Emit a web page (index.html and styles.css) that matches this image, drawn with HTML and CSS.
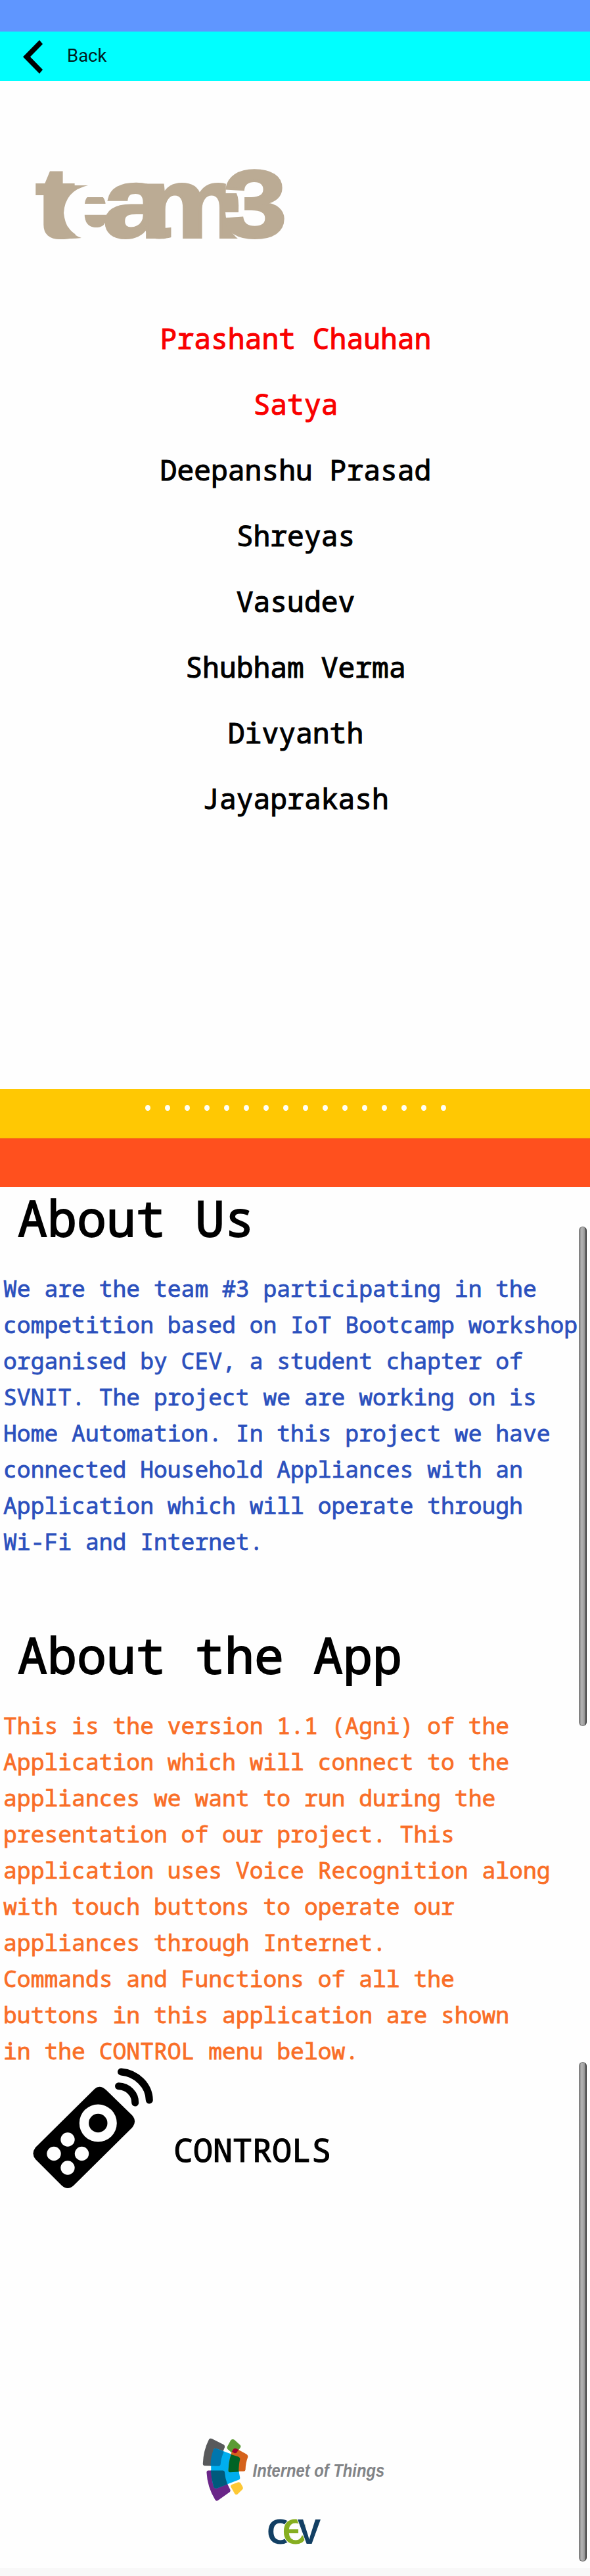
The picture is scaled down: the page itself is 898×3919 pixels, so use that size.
FILE: index.html
```
<!DOCTYPE html>
<html lang="en">
<head>
<meta charset="utf-8">
<title>About</title>
<link rel="stylesheet" href="styles.css">
</head>
<body>
<div class="status"></div>
<header class="bar">
<svg class="back" viewBox="0 0 30 51" width="30" height="51"><path d="M25 0L30 6L11 25.500L30 45L25 51L0 25.500Z"/></svg>
<span class="bar-label">Back</span>
</header>
<section class="team">
<svg class="logo" viewBox="0 0 390 120" width="390" height="120">
<g class="logo-text">
<path d="M78 50H116V96H78Z"/>
<text transform="scale(1.2 1)" y="111" font-size="150"><tspan x="3.700">t</tspan><tspan x="36" class="cut">e</tspan><tspan x="89">a</tspan><tspan x="135">m</tspan></text>
<path d="M36 32H84Q49 40 47 74Q50 104 74 112Q48 115 36 109Z"/>
<path class="hole" d="M294 24H350V114H313Q295 100 293 73Z"/>
<path d="M290 44H310Q314 52 313 73H290Z"/>
<text transform="scale(1.2 1)" x="241.500" y="110" font-size="145">3</text>
</g>
</svg>
<ul class="names">
<li class="lead">Prashant Chauhan</li>
<li class="lead">Satya</li>
<li>Deepanshu Prasad</li>
<li>Shreyas</li>
<li>Vasudev</li>
<li>Shubham Verma</li>
<li>Divyanth</li>
<li>Jayaprakash</li>
</ul>
</section>
<div class="band yellow">
<i></i><i></i><i></i><i></i><i></i><i></i><i></i><i></i><i></i><i></i><i></i><i></i><i></i><i></i><i></i><i></i>
</div>
<div class="band orange"></div>
<main class="about">
<div class="scroll first"></div>
<div class="scroll second"></div>
<h1>About Us</h1>
<p class="blue">We are the team #3 participating in the<br>competition based on IoT Bootcamp workshop<br>organised by CEV, a student chapter of<br>SVNIT. The project we are working on is<br>Home Automation. In this project we have<br>connected Household Appliances with an<br>Application which will operate through<br>Wi-Fi and Internet.</p>
<h1>About the App</h1>
<p class="amber">This is the version 1.1 (Agni) of the<br>Application which will connect to the<br>appliances we want to run during the<br>presentation of our project. This<br>application uses Voice Recognition along<br>with touch buttons to operate our<br>appliances through Internet.<br>Commands and Functions of all the<br>buttons in this application are shown<br>in the CONTROL menu below.</p>
<div class="controls">
<svg class="remote" viewBox="50 3146 184 186" width="184" height="186">
<path d="M144 3178Q152 3170.500 162 3180L201 3218Q209 3227 201 3237L112 3325Q103 3333 94 3325L54 3285Q47 3276.500 54 3267Z"/>
<circle cx="149.300" cy="3230" r="28.500" class="hole"/>
<circle cx="149.300" cy="3230" r="14.200"/>
<g class="hole"><circle cx="103" cy="3255" r="10.700"/><circle cx="82" cy="3276.500" r="10.700"/><circle cx="124.500" cy="3276.500" r="10.700"/><circle cx="103" cy="3298" r="10.700"/></g>
<path class="wave" d="M180.500 3173.700C195 3174 206 3186 205.700 3199M184.500 3152C208 3154 227 3173 227.300 3195"/>
</svg>
<span class="controls-label">CONTROLS</span>
</div>
<div class="brands">
<svg viewBox="84 86 840 292" width="280" height="97">
<path fill="#58595b" d="M113 92Q119 86 127 90L181 117Q187 121 185 129Q169 163 166 206Q165 215 157 215L92 213Q84 212 85 203Q87 143 113 92Z"/>
<path fill="#6a2688" d="M110 235H176Q184 235 185 243Q188 282 210 322Q213 330 206 335L153 373Q146 377 141 369Q105 310 102 244Q102 235 110 235Z"/>
<path fill="#5b9b35" d="M213 96Q221 89 229 94L254 117Q261 123 257 130L244 148L217 154L198 137Q193 132 197 125Z"/>
<path fill="#00aeef" d="M135 137Q139 132 148 135L247 172Q256 176 255 184Q247 210 251 246L255 267Q256 275 248 278L148 317Q137 318 134 309Q110 220 135 137Z"/>
<path fill="#0076ad" d="M135 137Q139 132 148 135L181 149Q168 178 166 206Q165 215 157 215L120 214Q120 170 135 137Z"/>
<path fill="#005a7c" d="M121 235H176Q184 235 185 243Q187 270 197 298L148 317Q137 318 134 309Q123 270 121 235Z"/>
<path fill="#d5621c" d="M222 139Q230 131 239 135L284 160Q293 166 291 174Q281 198 280 232Q279 239 271 239H208Q201 239 202 231Q204 181 222 139Z"/>
<path fill="#006325" d="M214 161L247 172Q256 176 255 184Q249 208 249 241L209 243Q201 243 202 234Q203 194 214 161Z"/>
<path fill="#98002e" d="M218 148L226 136Q232 131 239 135L248 140L240 153Q235 158 228 155Z"/>
<path fill="#fdc835" d="M217 300L245 289Q253 286 258 293L268 311Q271 318 265 323L243 344Q237 348 231 342L212 308Q211 303 217 300Z"/>
<text class="iot" x="313" y="265" font-size="82" textLength="604" lengthAdjust="spacingAndGlyphs">Internet of Things</text>
</svg>
<svg class="cev" viewBox="384 450 246 126" width="82" height="42">
<text y="569" font-size="160"><tspan x="379">C</tspan><tspan x="449" class="green">Є</tspan><tspan x="518">V</tspan></text>
</svg>
</div>
</main>
<footer class="foot"></footer>
</body>
</html>
```
FILE: styles.css
```
body{margin:0;width:898px;background:#fefefe;color:#000;font-family:"Droid Sans Mono","Noto Sans Mono","DejaVu Sans Mono",monospace}
svg{overflow:visible}
.status{height:48px;background:#5f96ff}
.bar{height:75px;background:#0ff;display:flex;align-items:flex-start}
.back{margin:13px 0 0 35px}
.bar-label{font:27.500px/32px Roboto,sans-serif;margin:21px 0 0 37px;color:#00201f}
.team{height:1534px}
.logo{display:block;padding:127px 0 0 50px}
.logo-text{fill:#bbab94;font-family:"Liberation Sans",Arial,sans-serif;font-weight:bold}
.logo-text text{stroke:#bbab94;stroke-width:4px}
.logo-text .cut{fill:#fefefe;stroke:#fefefe;stroke-width:4px}
.hole,.logo-text .hole{fill:#fefefe}
.names{list-style:none;margin:95px 0 0;padding:0 0 0 2px;text-align:center;font-size:43px;line-height:100px;-webkit-text-stroke:1.1px}
.names li{height:100px}
.lead{color:#f90000}
.band{height:74.500px;box-sizing:border-box}
.yellow{background:#ffc803;border-bottom:1px solid #ef9a08;display:flex;justify-content:center;gap:22px;padding-top:24px;padding-left:2px}
.yellow i{width:8px;height:9px;border-radius:50%;background:#fffff5}
.orange{background:#ff501e}
.about{position:relative;height:2101px}
.scroll{position:absolute;left:881px;width:12px;height:760px;box-sizing:border-box;border-radius:6px;background:linear-gradient(90deg,#858585,#b5b5b5 35%,#999 75%,#444);border:1px solid #777;border-right-color:#333}
.first{top:60px}
.second{top:1331px}
h1{margin:0;padding:0 0 0 27px;height:126px;line-height:92px;font-size:75px;font-weight:400;-webkit-text-stroke:1.8px}
p{margin:0;padding-left:5px;font-size:34.700px;line-height:55px;white-space:nowrap;-webkit-text-stroke:.8px}
.blue{color:#2b50bd;height:539px}
.amber{color:#f96e27}
.controls{display:flex;align-items:flex-start;height:562px}
.remote{margin:-1px 0 0 50px}
.wave{fill:none;stroke:#000;stroke-width:11px;stroke-linecap:round}
.controls-label{font-size:50px;line-height:60px;margin:93px 0 0 30px;-webkit-text-stroke:1.2px}
.brands{display:flex;flex-direction:column;align-items:flex-start;padding-left:308px}
.iot{font-family:"Liberation Sans",Arial,sans-serif;font-style:italic;font-weight:bold;fill:#828487}
.cev{margin:24px 0 0 100px;font-family:"Liberation Sans",Arial,sans-serif;font-weight:bold;fill:#123f63}
.cev tspan{stroke:#fefefe;stroke-width:6px;paint-order:stroke}
.green{fill:#86ae20}
.foot{height:12px;background:#f8f8f8}
```
